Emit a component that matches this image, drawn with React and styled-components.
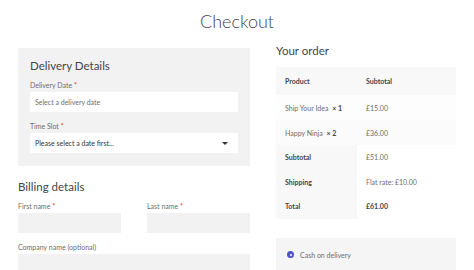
import React from 'react';
import styled, { createGlobalStyle } from 'styled-components';

const GlobalStyle = createGlobalStyle`
  body {
    margin: 0;
    background: #ffffff;
    font-family: Lato, "Noto Sans", sans-serif;
    color: #43454b;
  }
`;

const Page = styled.div`
  width: 474px;
  height: 270px;
  overflow: hidden;
  padding: 0 18px;
  box-sizing: border-box;
`;

const Title = styled.h1`
  margin: 0;
  height: 40px;
  line-height: 42px;
  text-align: center;
  font-size: 18px;
  font-weight: 300;
  color: #43454b;
`;

const Columns = styled.div`
  display: grid;
  grid-template-columns: 232px 180px;
  column-gap: 26px;
`;

const Column = styled.div`
  display: flex;
  flex-direction: column;
  padding-top: ${p => p.$top || 0}px;
`;

const DeliveryBox = styled.div`
  background: #f2f2f2;
  padding: 9px 12px 13px;
`;

const Heading = styled.h3`
  margin: ${p => p.$top || 0}px 0 ${p => p.$gap || 0}px;
  font-size: 11.5px;
  font-weight: 400;
  color: #43454b;
  line-height: 18px;
`;

const Label = styled.label`
  display: block;
  font-size: 7px;
  line-height: 9px;
  color: #6d6d6d;
  margin-bottom: 2px;

  span {
    color: #e2401c;
  }
`;

const Field = styled.div`
  margin-bottom: ${p => p.$mb || 0}px;
`;

const Input = styled.div`
  height: 20px;
  box-sizing: border-box;
  background: ${p => (p.$grey ? '#f2f2f2' : '#ffffff')};
  padding: 0 5px;
  display: flex;
  align-items: center;
  justify-content: space-between;
  font-size: 7px;
  color: ${p => (p.$dark ? '#333333' : '#6d6d6d')};
`;

const Caret = styled.span`
  width: 0;
  height: 0;
  border-left: 3px solid transparent;
  border-right: 3px solid transparent;
  border-top: 3px solid #333;
  margin-right: 5px;
`;

const NameRow = styled.div`
  display: grid;
  grid-template-columns: 103px 103px;
  justify-content: space-between;
  margin-bottom: 10px;
`;

const OrderTable = styled.table`
  width: 180px;
  border-collapse: collapse;
  font-size: 7px;
  margin-top: 7px;

  th, td {
    text-align: left;
    padding: 0 9px;
  }

  thead th {
    background: #f8f8f8;
    height: 28px;
    font-weight: 700;
    color: #43454b;
  }

  tbody td {
    background: #fdfdfd;
    color: #6d6d6d;
    height: 25px;
  }

  tbody tr:nth-child(2n) td {
    background: #fbfbfb;
  }

  tfoot th {
    background: #f8f8f8;
    width: 63px;
    font-weight: 700;
    color: #43454b;
    height: 24.5px;
  }

  tfoot td {
    background: #ffffff;
    color: #6d6d6d;
  }
`;

const Strong = styled.strong`
  color: #43454b;
`;

const Qty = styled.span`
  color: #6d6d6d;
  margin-left: 2px;
`;

const PaymentBox = styled.div`
  margin-top: 19px;
  background: #f5f5f5;
  height: 34px;
  display: flex;
  align-items: center;
  padding-left: 11px;
  gap: 6px;
  font-size: 7px;
  color: #6d6d6d;
`;

const Radio = styled.span`
  width: 7px;
  height: 7px;
  border-radius: 50%;
  background: #4f52c9;
  display: flex;
  align-items: center;
  justify-content: center;

  &::after {
    content: '';
    width: 2px;
    height: 2px;
    border-radius: 50%;
    background: #ffffff;
  }
`;

export default function App() {
  return (
    <>
      <GlobalStyle />
      <Page>
        <Title>Checkout</Title>
        <Columns>
          <Column $top={8}>
            <DeliveryBox>
              <Heading $gap={6}>Delivery Details</Heading>
              <Field $mb={10}>
                <Label>Delivery Date <span>*</span></Label>
                <Input>Select a delivery date</Input>
              </Field>
              <Field>
                <Label>Time Slot <span>*</span></Label>
                <Input $dark>
                  Please select a date first...
                  <Caret />
                </Input>
              </Field>
            </DeliveryBox>
            <Heading $top={12} $gap={6}>Billing details</Heading>
            <NameRow>
              <Field>
                <Label>First name <span>*</span></Label>
                <Input $grey />
              </Field>
              <Field>
                <Label>Last name <span>*</span></Label>
                <Input $grey />
              </Field>
            </NameRow>
            <Field>
              <Label>Company name (optional)</Label>
              <Input $grey />
            </Field>
          </Column>
          <Column $top={2}>
            <Heading>Your order</Heading>
            <OrderTable>
              <thead>
                <tr>
                  <th>Product</th>
                  <th>Subtotal</th>
                </tr>
              </thead>
              <tbody>
                <tr>
                  <td>Ship Your Idea <Qty><Strong>× 1</Strong></Qty></td>
                  <td>£15.00</td>
                </tr>
                <tr>
                  <td>Happy Ninja <Qty><Strong>× 2</Strong></Qty></td>
                  <td>£36.00</td>
                </tr>
              </tbody>
              <tfoot>
                <tr>
                  <th>Subtotal</th>
                  <td>£51.00</td>
                </tr>
                <tr>
                  <th>Shipping</th>
                  <td>Flat rate: £10.00</td>
                </tr>
                <tr>
                  <th>Total</th>
                  <td><Strong>£61.00</Strong></td>
                </tr>
              </tfoot>
            </OrderTable>
            <PaymentBox>
              <Radio />
              Cash on delivery
            </PaymentBox>
          </Column>
        </Columns>
      </Page>
    </>
  );
}
